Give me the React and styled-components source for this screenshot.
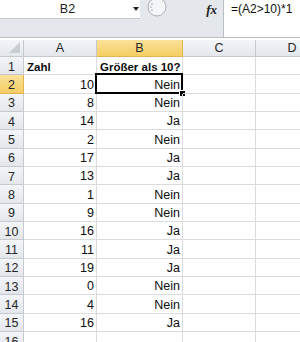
import React from 'react';
import styled, { createGlobalStyle, css } from 'styled-components';

const GlobalStyle = createGlobalStyle`
  body {
    margin: 0;
    background: #ffffff;
    font-family: 'Liberation Sans', Arial, sans-serif;
  }
`;

const rows = [
  ['Zahl', 'Größer als 10?'],
  [10, 'Nein'],
  [8, 'Nein'],
  [14, 'Ja'],
  [2, 'Nein'],
  [17, 'Ja'],
  [13, 'Ja'],
  [1, 'Nein'],
  [9, 'Nein'],
  [16, 'Ja'],
  [11, 'Ja'],
  [19, 'Ja'],
  [0, 'Nein'],
  [4, 'Nein'],
  [16, 'Ja'],
  ['', '']
];

const columns = ['A', 'B', 'C', 'D'];

const Frame = styled.div`
  width: 300px;
  height: 342px;
  overflow: hidden;
  background: #ffffff;
`;

const FormulaBar = styled.div`
  display: grid;
  grid-template-columns: 223px 1fr;
  height: 38px;
`;

const LeftPanel = styled.div`
  display: flex;
  flex-direction: column;
  background: #e4e7eb;
  border-bottom: 1px solid #b9bfc7;
`;

const NameRow = styled.div`
  display: flex;
  height: 19px;
`;

const NameBox = styled.div`
  width: 140px;
  display: flex;
  align-items: center;
  background: #ffffff;
  border-bottom: 1px solid #c4c9cf;
  box-sizing: border-box;
  font-size: 12.5px;
  color: #1a1a1a;
`;

const NameText = styled.span`
  flex: 1;
  text-align: center;
  padding-left: 2px;
`;

const DropArrow = styled.span`
  width: 0;
  height: 0;
  margin-right: 1px;
  border-left: 3px solid transparent;
  border-right: 3px solid transparent;
  border-top: 4px solid #222;
`;

const ToolArea = styled.div`
  flex: 1;
  display: flex;
  align-items: center;
  justify-content: space-between;
  padding: 0 6px 0 5px;
`;

const Fx = styled.span`
  font-family: 'Liberation Serif', 'Times New Roman', serif;
  font-style: italic;
  font-weight: bold;
  font-size: 13px;
  color: #222;
`;

const FormulaInput = styled.div`
  background: #ffffff;
  border-left: 1px solid #b9bfc7;
  border-bottom: 1px solid #b9bfc7;
  padding: 2px 0 0 7px;
  font-size: 12px;
  color: #111;
`;

const Sheet = styled.div`
  margin-top: 2px;
  display: grid;
  grid-template-columns: 24px 73px 86px 73px 73px;
  grid-template-rows: 17px repeat(16, 18.33px);
`;

const headerLook = css`
  box-sizing: border-box;
  display: flex;
  align-items: center;
  justify-content: center;
  font-size: 12.5px;
  color: #262626;
  background: ${p =>
    p.$active
      ? 'linear-gradient(#fae29a, #f5cd63)'
      : 'linear-gradient(#f3f5f8, #e3e7ec)'};
  border-right: 1px solid ${p => (p.$active ? '#e2b452' : '#c5cad1')};
  border-bottom: 1px solid ${p => (p.$active ? '#e2b452' : '#c5cad1')};
`;

const Corner = styled.div`
  ${headerLook};
  position: relative;
  &::after {
    content: '';
    position: absolute;
    right: 3px;
    bottom: 3px;
    border-left: 11px solid transparent;
    border-bottom: 11px solid #c9ced5;
  }
`;

const ColHeader = styled.div`
  ${headerLook};
`;

const RowHeader = styled.div`
  ${headerLook};
  padding-top: 2px;
`;

const Cell = styled.div`
  box-sizing: border-box;
  position: relative;
  display: flex;
  align-items: flex-end;
  justify-content: ${p => (p.$right ? 'flex-end' : 'flex-start')};
  padding: 0 2px 1px 3px;
  border-right: 1px solid #dadcdf;
  border-bottom: 1px solid #dadcdf;
  font-size: ${p => (p.$bold ? '11.5px' : '12.5px')};
  font-weight: ${p => (p.$bold ? 'bold' : 'normal')};
  color: #0d0d0d;
  white-space: nowrap;
  ${p =>
    p.$selected &&
    css`
      &::before {
        content: '';
        position: absolute;
        left: -2px;
        top: -2px;
        right: -1px;
        bottom: -1px;
        border: 2px solid #000;
      }
      &::after {
        content: '';
        position: absolute;
        right: -4px;
        bottom: -4px;
        width: 5px;
        height: 5px;
        background: #000;
        border: 1px solid #fff;
      }
    `}
`;

const Grip = () => (
  <svg width="22" height="19" viewBox="0 0 22 19">
    <circle cx="12" cy="7" r="9" fill="#f4f5f7" stroke="#aab0b8" strokeWidth="1" />
    <circle cx="7" cy="4" r="0.8" fill="#9aa0a8" />
    <circle cx="6" cy="7" r="0.8" fill="#9aa0a8" />
    <circle cx="7" cy="10" r="0.8" fill="#9aa0a8" />
  </svg>
);

export default function App() {
  return (
    <Frame>
      <GlobalStyle />
      <FormulaBar>
        <LeftPanel>
          <NameRow>
            <NameBox>
              <NameText>B2</NameText>
              <DropArrow />
            </NameBox>
            <ToolArea>
              <Grip />
              <Fx>fx</Fx>
            </ToolArea>
          </NameRow>
        </LeftPanel>
        <FormulaInput>=(A2&gt;10)*1</FormulaInput>
      </FormulaBar>
      <Sheet>
        <Corner />
        {columns.map(c => (
          <ColHeader key={c} $active={c === 'B'}>
            {c}
          </ColHeader>
        ))}
        {rows.map((r, i) => {
          const n = i + 1;
          const header = n === 1;
          return (
            <React.Fragment key={n}>
              <RowHeader $active={n === 2}>{n}</RowHeader>
              <Cell $right={!header} $bold={header}>
                {r[0]}
              </Cell>
              <Cell $right={!header} $bold={header} $selected={n === 2}>
                {r[1]}
              </Cell>
              <Cell />
              <Cell />
            </React.Fragment>
          );
        })}
      </Sheet>
    </Frame>
  );
}
